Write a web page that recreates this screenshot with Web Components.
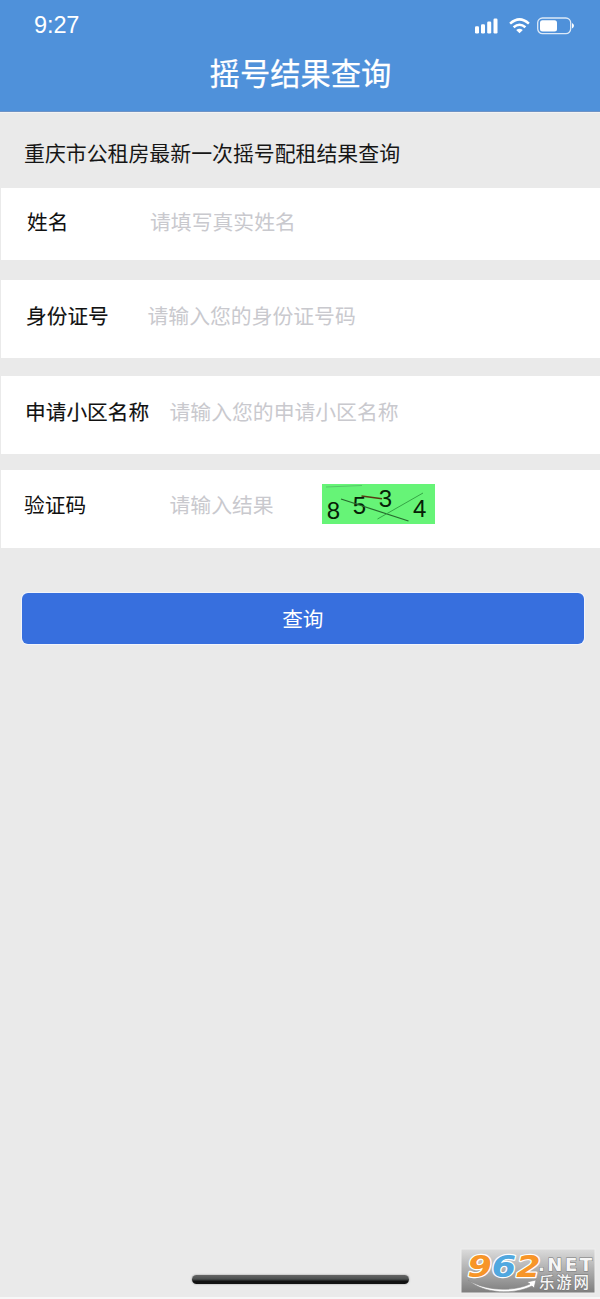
<!DOCTYPE html>
<html lang="zh-CN">
<head>
<meta charset="utf-8">
<title>摇号结果查询</title>
<style>
html,body{margin:0;padding:0;background:#eaeaea}
body{font-family:"Liberation Sans","Noto Sans CJK SC",sans-serif}
</style>
</head>
<body>
<lottery-page></lottery-page>
<script>
const define = (name, html) => customElements.define(name, class extends HTMLElement {
  constructor() {
    super();
    const t = document.createElement('template');
    t.innerHTML = html;
    this.attachShadow({mode: 'open'}).appendChild(t.content.cloneNode(true));
  }
});

define('status-bar', `
<style>
:host{display:flex;justify-content:space-between;align-items:center;height:50px;padding:0 25px 0 34px;box-sizing:border-box;color:#fff;font-size:23.5px;line-height:50px}
.time{letter-spacing:-.1px}
svg{display:block;margin-top:1px}
</style>
<span class="time">9:27</span>
<svg width="101" height="20" viewBox="474 16 101 20" fill="#fff">
<rect x="475" y="26.3" width="4" height="7.2" rx="1.2"/><rect x="481" y="24.3" width="4" height="9.2" rx="1.2"/><rect x="487.2" y="21.5" width="4" height="12" rx="1.2"/><rect x="493.5" y="18.5" width="4" height="15" rx="1.2"/>
<g fill="none" stroke="#fff" stroke-width="2.5"><path d="M510.1 23.6Q519.5 15.1 528.9 23.6"/><path d="M513.6 27.3Q519.5 22.2 525.4 27.3"/></g>
<path d="M516.2 30.1Q519.5 27.5 522.8 30.1L519.5 33.3Z"/>
<rect x="537.7" y="18" width="33" height="15.6" rx="4.8" fill="none" stroke="#fff" stroke-width="1.3" stroke-opacity=".8"/>
<rect x="540" y="20.2" width="17" height="11.2" rx="2.5"/>
<path d="M572 23.1Q574 24 574 25.8Q574 27.6 572 28.5Z"/>
</svg>`);

define('nav-header', `
<style>
:host{display:block;height:112px;background:#4f91da;box-sizing:border-box;box-shadow:inset 0 -1px #6e93c6,0 1px #f3f3f3}
h1{margin:0;text-align:center;color:#fff;font-weight:400;-webkit-text-stroke:.25px #fff;font-size:30.3px;line-height:49px;padding-left:1px}
</style>
<status-bar></status-bar><h1><slot></slot></h1>`);

define('form-row', `
<style>
:host{display:flex;align-items:flex-start;box-sizing:border-box;margin-left:1px;background:#fff;height:var(--h,78px);margin-bottom:var(--gap,16px);padding:var(--top,22px) 0 0 var(--left,25px);font-size:20.7px;line-height:30px;white-space:nowrap}
.label{width:var(--lw);color:#111;flex:none;font-size:20.7px;-webkit-text-stroke:var(--stroke,0)}
.hint{color:#c9c9ce;font-weight:400;font-size:20.83px;width:var(--hw,auto)}
</style>
<span class="label"><slot name="label"></slot></span><span class="hint"><slot></slot></span><slot name="extra"></slot>`);

define('captcha-code', `
<style>
:host{display:block;width:113px;height:40px;margin-top:-7px}
svg{display:block}
text{font-family:"Liberation Sans",sans-serif;font-size:24px;fill:#062006}
</style>
<svg width="113" height="40" viewBox="0 0 113 40">
<rect width="113" height="40" fill="#66f477"/>
<path d="M4 3L40 1.5" stroke="#55c767"/>
<text x="4.7" y="34.7">8</text><text x="30.7" y="30.3">5</text><text x="56.7" y="22.500">3</text><text x="91" y="32.7">4</text>
<path d="M19 15L86.500 37" stroke="#276b2e" stroke-width="1.200"/>
<path d="M55.500 35L101 9" stroke="#36a546"/>
<path d="M39.500 12L60 14.700" stroke="#593b12" stroke-width="1.500"/>
</svg>`);

define('submit-button', `
<style>
:host{display:block;margin:45px 16px 0 21.500px}
button{display:block;width:100%;height:51px;border:0;border-radius:6px;background:#376fde;box-shadow:0 0 0 1px #f1f4fb;color:#fff;font:400 20.6px/50px "Noto Sans CJK SC",sans-serif;padding:0 0 2px}
</style>
<button><slot></slot></button>`);

define('home-indicator', `
<style>
:host{display:block;width:217px;height:9px;border-radius:5px;background:linear-gradient(#666,#4c4f4f 45%,#111 70%,#111);box-shadow:0 0 2px #888}
</style>`);

define('site-badge', `
<style>
:host{display:block;width:134px;height:44px}
svg{display:block;overflow:visible}
text{font-family:"Liberation Sans","Noto Sans CJK SC",sans-serif;font-weight:700}
.num{font-family:"DejaVu Sans",sans-serif;font-size:31px;font-style:italic;stroke:#fff;stroke-width:2.4px;paint-order:stroke;stroke-linejoin:round}
.small{fill:#f6f6f6;stroke:#777;stroke-width:1px;paint-order:stroke}
.net{font-family:"DejaVu Sans",sans-serif}
.cn{font-weight:500}
</style>
<svg width="134" height="44" viewBox="0 0 134 44">
<defs><linearGradient id="g" x2="0" y2="1"><stop stop-color="#dcdcdc"/><stop offset="1" stop-color="#7d7d7d"/></linearGradient></defs>
<rect width="134" height="44" fill="url(#g)" stroke="#eee"/>
<text class="num" x="6.500" y="27.500" textLength="73" lengthAdjust="spacingAndGlyphs"><tspan fill="#f79528">9</tspan><tspan fill="#51a8df">6</tspan><tspan fill="#f79528">2</tspan></text>
<text class="small net" x="77" y="21.500" font-size="18" textLength="54" lengthAdjust="spacing">.NET</text>
<text class="small cn" x="78" y="39" font-size="15.500" textLength="50">乐游网</text>
<path d="M7 31C24 42 52 43 69 35L66 33L75 31L73 39L71 37C53 46 23 45 7 31Z" fill="#fff" stroke="#888" stroke-width=".6"/>
</svg>`);

define('lottery-page', `
<style>
:host{display:flex;flex-direction:column;height:1299px;background:#eaeaea;box-sizing:border-box;border-bottom:2px solid #f7f7f7}
p{margin:0;height:76px;box-sizing:border-box;padding:27px 0 0 24px;font-size:20.9px;line-height:30px;color:#161616;white-space:nowrap}
.name{--h:72px;--gap:20px;--top:20px;--left:26px;--lw:123px}
.id{--lw:121.5px;--stroke:.15px #111;--gap:18px}
.area{--left:24px;--lw:144.5px;--stroke:.15px #111}
.code{--left:23px;--lw:145.5px;--hw:152.500px;--gap:0px;--top:21px}
footer{margin-top:auto;display:grid;grid-template-columns:192px 217px 1fr;align-items:start;padding-bottom:4px}
home-indicator{grid-column:2;margin-top:26px}
site-badge{justify-self:end;margin-right:5px}
</style>
<nav-header>摇号结果查询</nav-header>
<p>重庆市公租房最新一次摇号配租结果查询</p>
<form-row class="name"><span slot="label">姓名</span>请填写真实姓名</form-row>
<form-row class="id"><span slot="label">身份证号</span>请输入您的身份证号码</form-row>
<form-row class="area"><span slot="label">申请小区名称</span>请输入您的申请小区名称</form-row>
<form-row class="code"><span slot="label">验证码</span>请输入结果<captcha-code slot="extra"></captcha-code></form-row>
<submit-button>查询</submit-button>
<footer><home-indicator></home-indicator><site-badge></site-badge></footer>`);
</script>
</body>
</html>
